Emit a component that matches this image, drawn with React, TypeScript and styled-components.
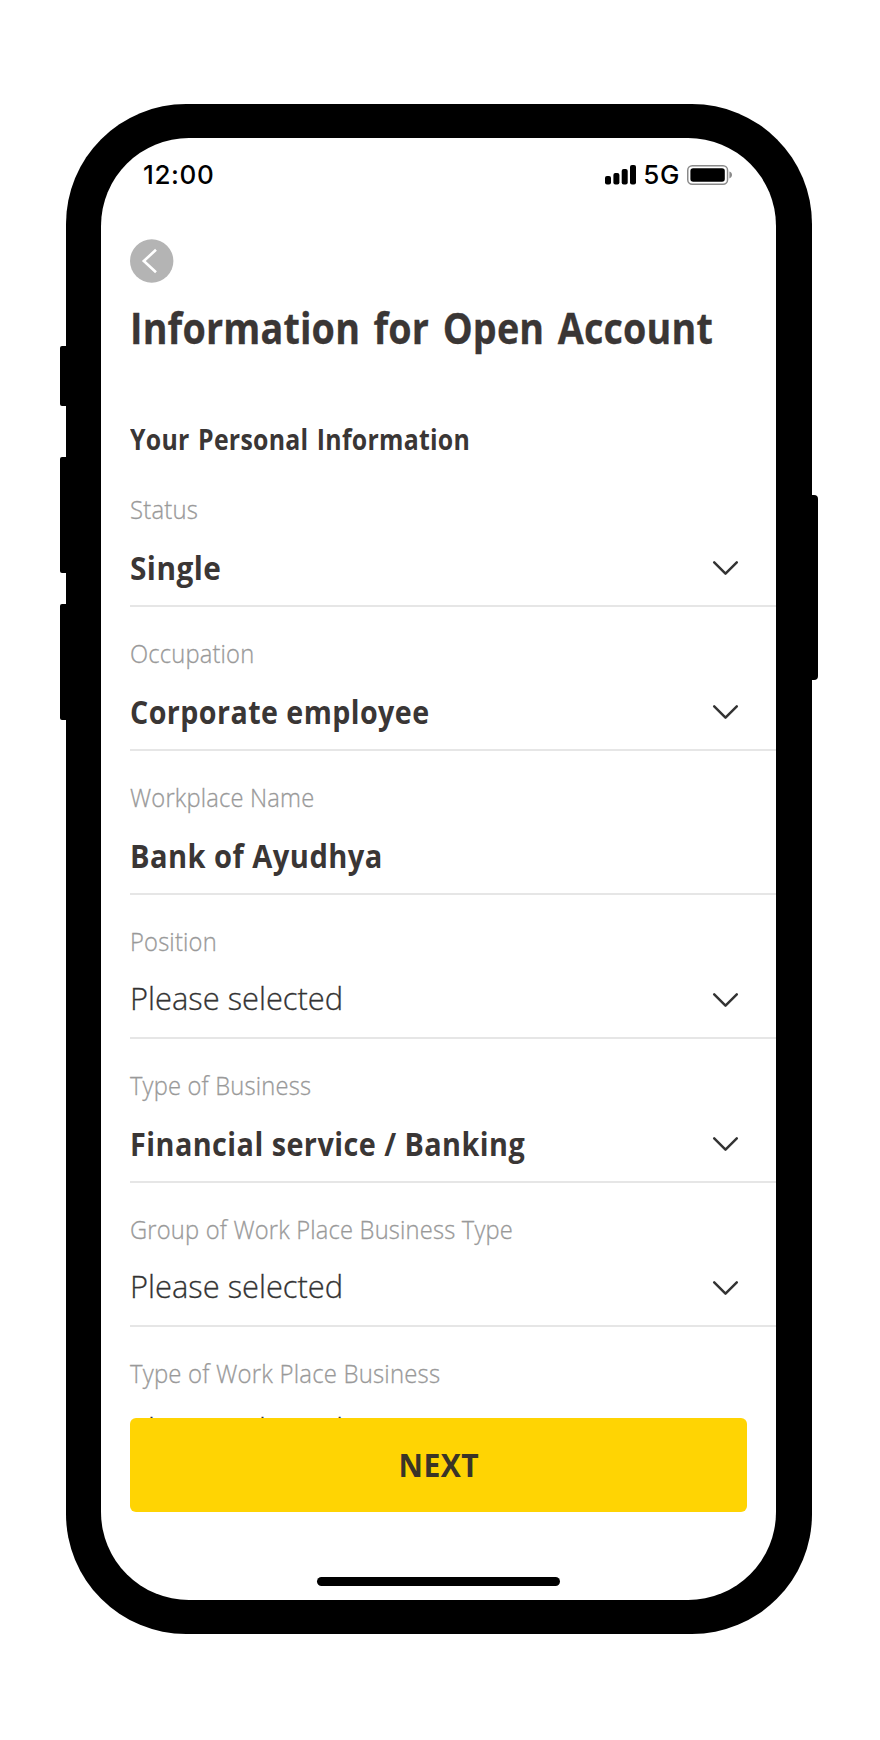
import React from "react";
import styled, { createGlobalStyle } from "styled-components";

const GlobalStyle = createGlobalStyle`
  *, *::before, *::after { box-sizing: border-box; }
  body {
    margin: 0;
    background: #fff;
    font-family: "Open Sans", "Noto Sans", sans-serif;
    color: #3a3635;
  }
`;

const Stage = styled.main`
  display: flex;
  justify-content: center;
  height: 1740px;
  padding: 104px 2px 0 0;
  background: #fff;
`;

const Phone = styled.div`
  position: relative;
  width: 746px;
  height: 1530px;
  padding: 34px 36px 34px 35px;
  border-radius: 120px;
  background: #000;
`;

const SideButton = styled.span<{ $side: "left" | "right"; $top: number; $height: number }>`
  position: absolute;
  ${(p) => p.$side}: -6px;
  top: ${(p) => p.$top}px;
  width: 12px;
  height: ${(p) => p.$height}px;
  border-radius: ${(p) => (p.$side === "left" ? "2px 0 0 2px" : "0 4px 4px 0")};
  background: #000;
`;

const Screen = styled.div`
  position: relative;
  display: flex;
  flex-direction: column;
  height: 100%;
  border-radius: 88px;
  overflow: hidden;
  background: #fff;
`;

const StatusBar = styled.div`
  display: flex;
  flex: none;
  align-items: center;
  justify-content: space-between;
  height: 73px;
  padding: 0 43px 0 42px;
  color: #000;
  font-family: Inter, "Liberation Sans", sans-serif;
  font-size: 26px;
  font-weight: 460;
`;

const Clock = styled.time`
  letter-spacing: 0.6px;
`;

const Indicators = styled.div`
  display: flex;
  align-items: center;
`;

const Network = styled.span`
  margin: 0 7px 0 7px;
  letter-spacing: 0.6px;
`;

const Header = styled.header`
  flex: none;
  padding: 28px 0 0 29px;
`;

const BackButton = styled.button`
  display: block;
  width: 44px;
  height: 44px;
  padding: 0;
  border: 0;
  background: none;
`;

const Title = styled.h1`
  margin: 17px 0 0;
  font-size: 43px;
  font-weight: 700;
  line-height: 56px;
  letter-spacing: 0.2px;
  word-spacing: 4px;
  white-space: nowrap;
  transform: scaleX(0.877);
  transform-origin: left;
  -webkit-text-stroke: 0.3px currentColor;
`;

const SectionTitle = styled.h2`
  margin: 63px 0 0;
  font-size: 28px;
  font-weight: 700;
  line-height: 40px;
  letter-spacing: 0.3px;
  word-spacing: 2px;
  white-space: nowrap;
  transform: scaleX(0.887);
  transform-origin: left;
`;

const Form = styled.div`
  flex: 1;
  min-height: 0;
  margin-top: 4px;
  padding-left: 29px;
  overflow: hidden;
`;

const FieldRow = styled.div`
  display: flex;
  flex-direction: column;
  height: 144px;
  padding-top: 28px;
  border-bottom: 2px solid #e6e6e6;
`;

const Label = styled.span<{ $fit?: number }>`
  align-self: flex-start;
  color: #999;
  font-size: 25px;
  font-weight: 300;
  line-height: 36px;
  letter-spacing: 0.2px;
  white-space: nowrap;
  transform: scaleX(${(p) => p.$fit ?? 0.948});
  transform-origin: left;
  -webkit-text-stroke: 0.3px currentColor;
`;

const ValueLine = styled.div`
  display: flex;
  align-items: flex-start;
  justify-content: space-between;
  margin-top: 18px;
  padding-right: 37px;
`;

const Value = styled.span<{ $fit: number }>`
  margin-top: 1px;
  font-size: 31.5px;
  font-weight: 700;
  line-height: 44px;
  letter-spacing: 0.5px;
  white-space: nowrap;
  transform: scaleX(${(p) => p.$fit});
  transform-origin: left;
`;

const Placeholder = styled.span<{ $raised?: boolean }>`
  margin-top: ${(p) => (p.$raised ? -2 : -1)}px;
  color: #333;
  font-size: 31px;
  font-weight: 300;
  line-height: 44px;
  white-space: nowrap;
  transform: scaleX(0.995);
  transform-origin: left;
  -webkit-text-stroke: 0.3px currentColor;
`;

const ChevronIcon = styled.svg`
  flex: none;
  width: 28px;
  height: 18px;
  margin-top: 14px;
`;

const Footer = styled.footer`
  display: flex;
  flex: none;
  flex-direction: column;
  align-items: center;
  height: 182px;
  padding: 0 29px 0 29px;
`;

const NextButton = styled.button`
  display: flex;
  align-items: center;
  justify-content: center;
  width: 617px;
  height: 94px;
  padding: 0;
  border: 0;
  border-radius: 6px;
  background: #ffd403;
`;

const NextLabel = styled.span`
  color: #3a3427;
  font-family: "Open Sans", "Noto Sans", sans-serif;
  font-size: 32px;
  font-weight: 700;
  line-height: 44px;
  letter-spacing: 0.5px;
  transform: scaleX(0.94);
`;

const HomeIndicator = styled.div`
  width: 243px;
  height: 9px;
  margin-top: 65px;
  border-radius: 5px;
  background: #000;
`;

const SignalIcon = () => (
  <svg width="31" height="20" viewBox="0 0 31 20" fill="#000">
    <rect x="0" y="11" width="6" height="8.5" rx="2" />
    <rect x="8.4" y="8" width="6" height="11.5" rx="2" />
    <rect x="16.7" y="4" width="6" height="15.5" rx="2" />
    <rect x="25" y="0" width="6" height="19.5" rx="2" />
  </svg>
);

const BatteryIcon = () => (
  <svg width="46" height="20" viewBox="0 0 46 20" fill="none">
    <rect x="0.75" y="0.75" width="39.8" height="18.5" rx="4.5" stroke="#8a8a8a" strokeWidth="1.5" />
    <rect x="3.4" y="3.2" width="34.4" height="13.6" rx="2.8" fill="#000" />
    <path d="M42.4 6.6c1.6.5 2.6 1.9 2.6 3.4s-1 2.9-2.6 3.4z" fill="#8a8a8a" />
  </svg>
);

const BackIcon = () => (
  <svg width="44" height="44" viewBox="0 0 44 44" fill="none">
    <circle cx="21.7" cy="22" r="21.7" fill="#b4b4b4" />
    <path d="M26 10.8 13.8 22 26 33.2" stroke="#fff" strokeWidth="2.6" />
  </svg>
);

const Chevron = () => (
  <ChevronIcon viewBox="0 0 28 18" fill="none">
    <path
      d="m3.2 3.4 11.3 11.3L25.8 3.4"
      stroke="#333"
      strokeWidth="2.5"
      strokeLinecap="round"
      strokeLinejoin="round"
    />
  </ChevronIcon>
);

type Field = {
  label: string;
  labelFit?: number;
  value?: string;
  fit?: number;
  select: boolean;
};

const fields: Field[] = [
  { label: "Status", labelFit: 0.955, value: "Single", fit: 0.945, select: true },
  { label: "Occupation", value: "Corporate employee", fit: 0.908, select: true },
  { label: "Workplace Name", value: "Bank of Ayudhya", fit: 0.923, select: false },
  { label: "Position", select: true },
  { label: "Type of Business", value: "Financial service / Banking", fit: 0.914, select: true },
  { label: "Group of Work Place Business Type", select: true },
  { label: "Type of Work Place Business", labelFit: 0.957, select: false },
];

export default function App() {
  return (
    <>
      <GlobalStyle />
      <Stage>
        <Phone>
          <SideButton $side="left" $top={242} $height={60} />
          <SideButton $side="left" $top={353} $height={116} />
          <SideButton $side="left" $top={500} $height={116} />
          <SideButton $side="right" $top={391} $height={185} />
          <Screen>
            <StatusBar>
              <Clock>12:00</Clock>
              <Indicators>
                <SignalIcon />
                <Network>5G</Network>
                <BatteryIcon />
              </Indicators>
            </StatusBar>
            <Header>
              <BackButton aria-label="Back">
                <BackIcon />
              </BackButton>
              <Title>Information for Open Account</Title>
              <SectionTitle>Your Personal Information</SectionTitle>
            </Header>
            <Form>
              {fields.map((field) => (
                <FieldRow key={field.label}>
                  <Label $fit={field.labelFit}>{field.label}</Label>
                  <ValueLine>
                    {field.value ? (
                      <Value $fit={field.fit ?? 0.92}>{field.value}</Value>
                    ) : (
                      <Placeholder $raised={!field.select}>Please selected</Placeholder>
                    )}
                    {field.select && <Chevron />}
                  </ValueLine>
                </FieldRow>
              ))}
            </Form>
            <Footer>
              <NextButton>
                <NextLabel>NEXT</NextLabel>
              </NextButton>
              <HomeIndicator />
            </Footer>
          </Screen>
        </Phone>
      </Stage>
    </>
  );
}
